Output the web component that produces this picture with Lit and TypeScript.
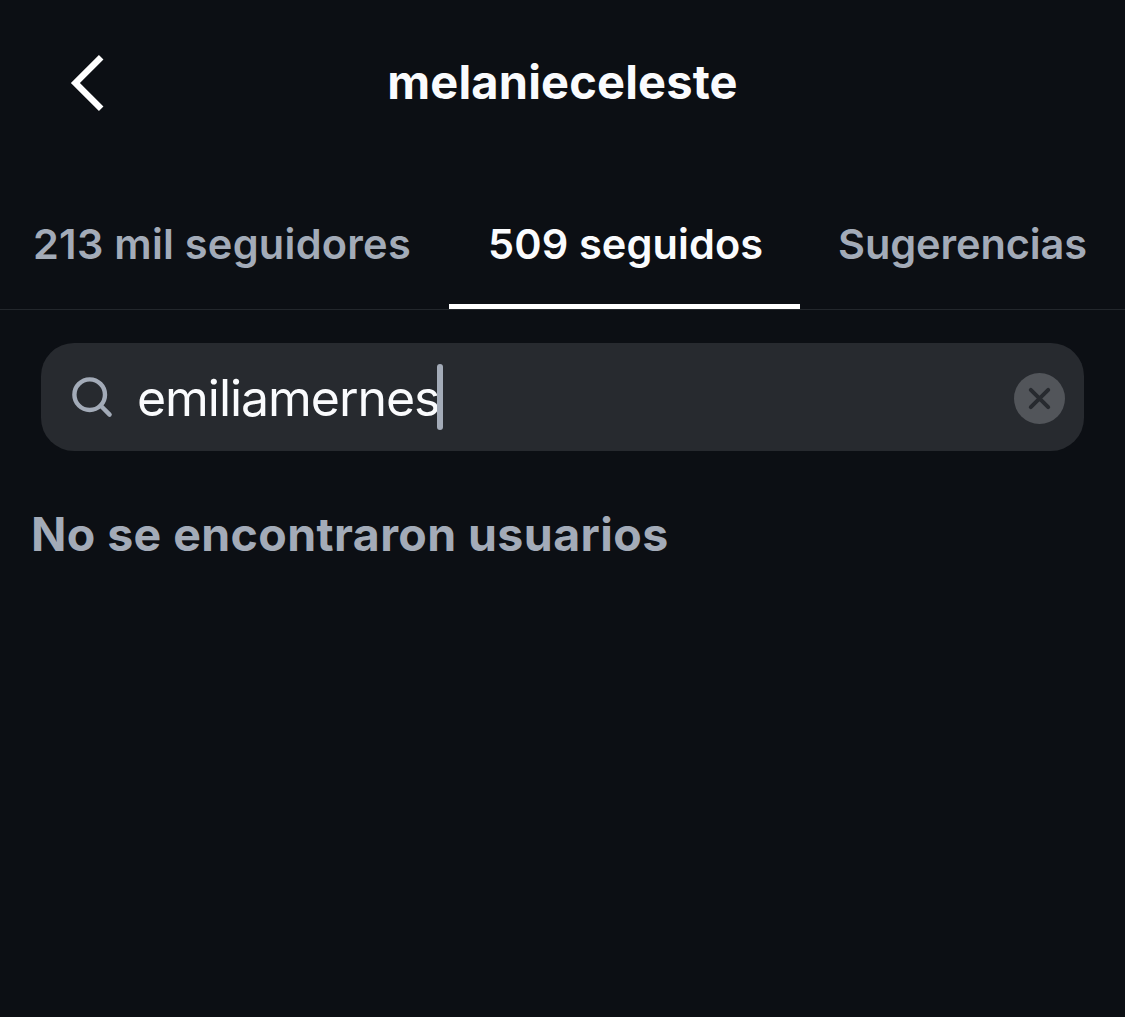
import { LitElement, html, css } from 'lit';

export class FollowTabs extends LitElement {
  static properties = {
    tabs: { type: Array },
    selected: { type: String }
  };

  tabs: any[] = [];
  selected = '';

  static styles = css`
    :host {
      display: block;
    }
    .tabs {
      display: grid;
      grid-template-columns: 449px 351px 1fr;
      height: 144px;
      border-bottom: 1px solid #23272c;
    }
    .tab {
      display: flex;
      align-items: center;
      box-sizing: border-box;
      padding: 19px 0 0 38px;
      border: 0;
      border-bottom: 5px solid transparent;
      background: none;
      color: #a3abb8;
      font: 600 41.5px/50px Inter, sans-serif;
      letter-spacing: 0.1px;
      white-space: nowrap;
    }
    .tab:first-child {
      padding-left: 33px;
      letter-spacing: 0.25px;
    }
    .tab.selected {
      padding-left: 39px;
      color: #fafbfd;
      border-bottom-color: #fff;
    }
    .tab:last-child {
      letter-spacing: -0.1px;
    }
  `;

  render() {
    return html`
      <div class="tabs">
        ${this.tabs.map((tab: any) => html`
          <button
            class="tab ${tab.id === this.selected ? 'selected' : ''}"
            @click=${() => { this.selected = tab.id; }}
          >${tab.label}</button>
        `)}
      </div>
    `;
  }
}

customElements.define('follow-tabs', FollowTabs);

export class SearchField extends LitElement {
  static properties = {
    value: { type: String }
  };

  value = '';

  static styles = css`
    :host {
      display: block;
    }
    .field {
      display: flex;
      align-items: center;
      box-sizing: border-box;
      height: 108px;
      padding: 0 19px 0 30px;
      border-radius: 33px;
      background: #272a2f;
    }
    .magnifier {
      width: 42px;
      height: 42px;
      margin-right: 24px;
    }
    .value {
      padding-top: 2px;
      color: #fafbfd;
      font: 400 50px/60px Inter, sans-serif;
      letter-spacing: -1.05px;
      white-space: nowrap;
    }
    .caret {
      width: 6px;
      height: 66px;
      margin-left: -2px;
      border-radius: 3px;
      background: #a3abb8;
    }
    .clear {
      width: 51px;
      height: 51px;
      margin: 3px 0 0 auto;
      padding: 0;
      border: 0;
      background: none;
    }
    .clear svg {
      display: block;
    }
  `;

  render() {
    return html`
      <div class="field">
        <svg class="magnifier" viewBox="0 0 42 42" fill="none" stroke="#a3abb8" stroke-width="4.4" stroke-linecap="round">
          <circle cx="18.7" cy="18.7" r="15.3" />
          <path d="M29.8 29.8L38.6 38.6" />
        </svg>
        <span class="value">${this.value}</span>
        <span class="caret"></span>
        <button class="clear" aria-label="Borrar" @click=${() => { this.value = ''; }}>
          <svg width="51" height="51" viewBox="0 0 51 51">
            <circle cx="25.5" cy="25.5" r="25.5" fill="#52555a" />
            <path d="M16.8 16.8L34.2 34.2M34.2 16.8L16.8 34.2" stroke="#272a2f" stroke-width="4" stroke-linecap="round" />
          </svg>
        </button>
      </div>
    `;
  }
}

customElements.define('search-field', SearchField);

export class AppRoot extends LitElement {
  static styles = css`
    :host {
      display: block;
    }
    .screen {
      box-sizing: border-box;
      height: 1017px;
      overflow: hidden;
      background: #0c0f14;
      font-family: Inter, sans-serif;
    }
    .header {
      display: grid;
      grid-template-columns: 160px 1fr 160px;
      align-items: center;
      height: 165px;
    }
    .back {
      margin-left: 66px;
      width: 42px;
      height: 64px;
    }
    .title {
      margin: 0;
      padding-bottom: 2px;
      color: #fafbfd;
      font-size: 47px;
      font-weight: 700;
      line-height: 56px;
      letter-spacing: 0.15px;
      text-align: center;
    }
    .content {
      padding: 33px 41px 0;
    }
    .empty {
      margin: 55px 0 0 -10px;
      color: #a3abb8;
      font-size: 46.5px;
      font-weight: 700;
      line-height: 56px;
      letter-spacing: 0.4px;
      white-space: nowrap;
    }
  `;

  tabs = [
    { id: 'followers', label: '213 mil seguidores' },
    { id: 'following', label: '509 seguidos' },
    { id: 'suggestions', label: 'Sugerencias' }
  ];

  render() {
    return html`
      <div class="screen">
        <div class="header">
          <svg class="back" viewBox="0 0 42 64" fill="none" stroke="#fff" stroke-width="6.4">
            <path d="M35.2 6.2L9.4 32L35.2 57.8" />
          </svg>
          <h1 class="title">melanieceleste</h1>
        </div>
        <follow-tabs .tabs=${this.tabs} selected="following"></follow-tabs>
        <div class="content">
          <search-field value="emiliamernes"></search-field>
          <p class="empty">No se encontraron usuarios</p>
        </div>
      </div>
    `;
  }
}

customElements.define('app-root', AppRoot);
